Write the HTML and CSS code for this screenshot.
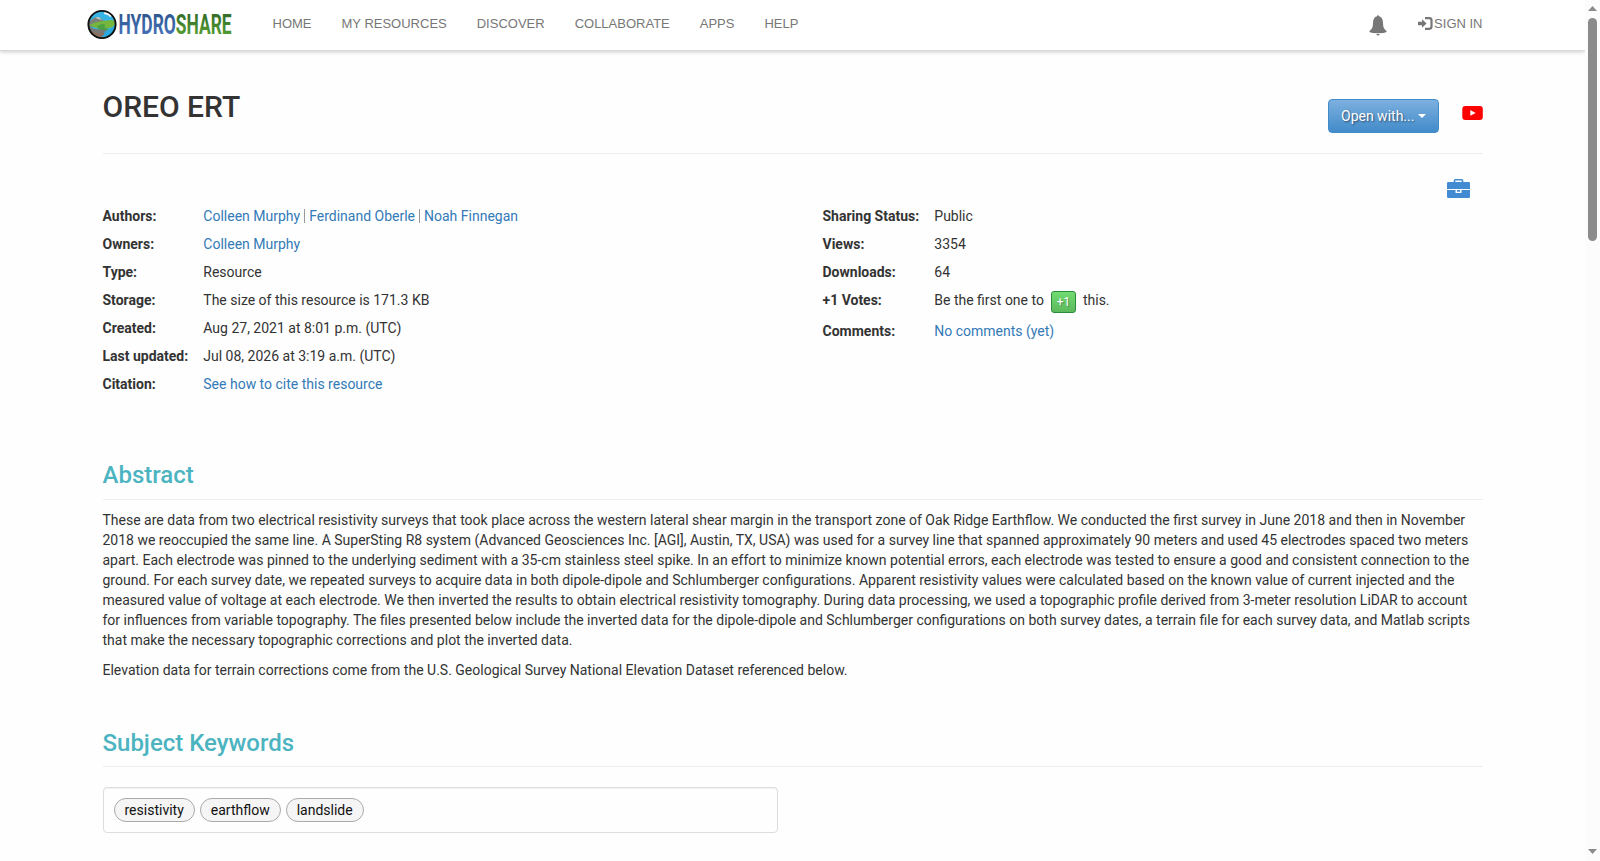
FILE: index.html
```html
<!DOCTYPE html>
<html lang="en">
<head>
<meta charset="utf-8">
<title>OREO ERT | HydroShare</title>
<link rel="stylesheet" href="styles.css">
</head>
<body>
<div class="viewport">
<div class="page">
  <header class="navbar">
    <div class="nav-inner">
      <a class="brand" aria-label="HydroShare">
        <svg width="146" height="32" viewBox="0 0 146 32">
          <defs>
            <linearGradient id="blue" x1="0" y1="0" x2="0" y2="1"><stop offset=".2" stop-color="#305a93"/><stop offset="1" stop-color="#4c78c6"/></linearGradient>
            <linearGradient id="green" x1="0" y1="0" x2="0" y2="1"><stop offset=".2" stop-color="#36702a"/><stop offset="1" stop-color="#62ad35"/></linearGradient>
            <clipPath id="globe"><circle cx="15" cy="16.500" r="14"/></clipPath>
          </defs>
          <g clip-path="url(#globe)">
            <rect width="30" height="32" fill="#38b4e4"/>
            <path d="M0 15L8 9.500l4-.5 5 4 7 1 2 5H0z" fill="#7b7f79"/>
            <path d="M8 9.500l4-.5 3 3-4-1z" fill="#c6cbc8"/>
            <path d="M2 17q6-3 13-4l9-1q3 0 5 2l-3 5-8 2-9-1z" fill="#76b63f"/>
            <path d="M12 17q5-2 6 0-2 3 5 4l-7 2q-9-3-4-6z" fill="#4aa244"/>
            <path d="M0 18q6 3 13 3.500 8 0 9 2.500l-7 8H0z" fill="#777974"/>
            <path d="M4 23q5 3 14 2l-3 6H8z" fill="#8b6f5f"/>
            <path d="M17 24l6-3 6-4-4 12H14q5-3 3-5z" fill="#29a9dc"/>
            <path d="M17 6q0-3 3-2 2-2 4 0 4 0 4 3l-3 1-2 1-2-2z" fill="#fff"/>
          </g>
          <circle cx="15" cy="16.500" r="13.600" fill="none" stroke="#111" stroke-width="1.900"/>
          <g transform="translate(31.500 26.300) scale(.65 1)">
            <text class="logo-text" textLength="174" lengthAdjust="spacingAndGlyphs"><tspan fill="url(#blue)">HYDRO</tspan><tspan fill="url(#green)">SHARE</tspan></text>
          </g>
        </svg>
      </a>
      <nav class="menu"><a>HOME</a><a>MY RESOURCES</a><a>DISCOVER</a><a>COLLABORATE</a><a>APPS</a><a>HELP</a></nav>
      <div class="account">
        <svg class="bell" width="18" height="21" viewBox="0 0 18 21" fill="#777"><path d="M8 1.300q0-1 1-1t1 1Q14 2.500 14 8q0 5.500 3 7.500 1 .8.500 1.500Q15.500 18.200 9 18.200T.5 17q-.5-.7.5-1.500 3-2 3-7.500 0-5.500 4-6.700zM7.300 18.900h3.400Q10.300 20.400 9 20.400t-1.700-1.500z"/></svg>
        <a class="signin"><svg width="15" height="13" viewBox="0 0 15 13"><path d="M0 4.700h4V2.300l4.600 4.200L4 10.700V8.300H0z" fill="#777"/><path d="M7 1.200h4.300q2.200 0 2.200 2.200v6.200q0 2.200-2.200 2.200H7" fill="none" stroke="#777" stroke-width="2.200"/></svg><span>SIGN IN</span></a>
      </div>
    </div>
  </header>
  <main class="content">
    <div class="title-row">
      <h1>OREO ERT</h1>
      <div class="title-actions">
        <button class="open-with">Open with...<span class="caret"></span></button>
        <svg width="21" height="14" viewBox="0 0 21 14"><rect x=".3" width="20.500" height="14" rx="3" fill="#f00"/><path d="M8.300 4v5.800L13.700 7z" fill="#fff"/></svg>
      </div>
    </div>
    <div class="tools">
      <svg width="23" height="19" viewBox="0 0 23 19"><path d="M7.500 3.500V1.500q0-.7.7-.7h6.600q.7 0 .7.700v2" fill="none" stroke="#428bd3" stroke-width="1.600"/><path d="M1.200 3h20.600Q23 3 23 4.200V10H0V4.200Q0 3 1.200 3zM0 11h8.500v3h6v-3H23v6.800q0 1.200-1.200 1.200H1.200Q0 19 0 17.800z" fill="#428bd3"/><path d="M10 11h3v1.700h-3z" fill="#428bd3"/></svg>
    </div>
    <div class="meta">
      <dl class="facts facts-left">
        <dt>Authors:</dt><dd class="authors"><a>Colleen Murphy</a><a>Ferdinand Oberle</a><a>Noah Finnegan</a></dd>
        <dt>Owners:</dt><dd><a>Colleen Murphy</a></dd>
        <dt>Type:</dt><dd>Resource</dd>
        <dt>Storage:</dt><dd>The size of this resource is 171.3 KB</dd>
        <dt>Created:</dt><dd>Aug 27, 2021 at 8:01 p.m. (UTC)</dd>
        <dt>Last updated:</dt><dd>Jul 08, 2026 at 3:19 a.m. (UTC)</dd>
        <dt>Citation:</dt><dd><a>See how to cite this resource</a></dd>
      </dl>
      <dl class="facts facts-right">
        <dt>Sharing Status:</dt><dd>Public</dd>
        <dt>Views:</dt><dd>3354</dd>
        <dt>Downloads:</dt><dd>64</dd>
        <dt>+1 Votes:</dt><dd class="votes"><span>Be the first one to</span><button class="plus">+1</button><span>this.</span></dd>
        <dt>Comments:</dt><dd><a>No comments (yet)</a></dd>
      </dl>
    </div>
    <section class="abstract">
      <h2>Abstract</h2>
      <p>These are data from two electrical resistivity surveys that took place across the western lateral shear margin in the transport zone of Oak Ridge Earthflow. We conducted the first survey in June 2018 and then in November 2018 we reoccupied the same line. A SuperSting R8 system (Advanced Geosciences Inc. [AGI], Austin, TX, USA) was used for a survey line that spanned approximately 90 meters and used 45 electrodes spaced two meters apart. Each electrode was pinned to the underlying sediment with a 35-cm stainless steel spike. In an effort to minimize known potential errors, each electrode was tested to ensure a good and consistent connection to the ground. For each survey date, we repeated surveys to acquire data in both dipole-dipole and Schlumberger configurations. Apparent resistivity values were calculated based on the known value of current injected and the measured value of voltage at each electrode. We then inverted the results to obtain electrical resistivity tomography. During data processing, we used a topographic profile derived from 3-meter resolution LiDAR to account for influences from variable topography. The files presented below include the inverted data for the dipole-dipole and Schlumberger configurations on both survey dates, a terrain file for each survey data, and Matlab scripts that make the necessary topographic corrections and plot the inverted data.</p>
      <p>Elevation data for terrain corrections come from the U.S. Geological Survey National Elevation Dataset referenced below.</p>
    </section>
    <section class="keywords">
      <h2>Subject Keywords</h2>
      <div class="tags"><a>resistivity</a><a>earthflow</a><a>landslide</a></div>
    </section>
  </main>
</div>
<div class="scrollbar">
  <svg width="9" height="5" viewBox="0 0 9 5"><path d="M0 5L4.500 0 9 5z" fill="#8b8b8b"/></svg>
  <div class="thumb"></div>
  <svg class="down" width="9" height="5" viewBox="0 0 9 5"><path d="M0 0h9L4.500 5z" fill="#8b8b8b"/></svg>
</div>
</div>
</body>
</html>
```
FILE: styles.css
```css
* { box-sizing: border-box; }
body {
  margin: 0;
  font: 14px/20px Roboto, sans-serif;
  color: #333;
  background: #fefefe;
}
svg { display: block; flex: none; }
a { color: #337ab7; text-decoration: none; }
h1, h2, p, dl, dd { margin: 0; }

.viewport { display: flex; height: 861px; overflow: hidden; }
.page { width: 1585px; }

.navbar {
  height: 51px;
  background: #fff;
  border-bottom: 1px solid #d9d9d9;
  box-shadow: 0 1px 4px rgba(0, 0, 0, .2);
}
.nav-inner {
  display: flex;
  width: 1410px;
  height: 50px;
  margin: 0 auto;
  font: 13px/20px "Liberation Sans", Arial, sans-serif;
}
.nav-inner a { color: #777; }
.brand { width: 146px; padding-top: 8px; }
.brand svg { margin-left: -0.500px; }
.logo-text { font: bold 27px Roboto, sans-serif; }
.menu { display: flex; gap: 30px; padding: 14px 0 0 39px; }
.account { display: flex; gap: 31px; margin-left: auto; padding-right: 15px; }
.bell { margin-top: 15px; }
.signin { display: flex; gap: 1px; padding-top: 14px; }
.signin svg { margin-top: 3px; }

.content { width: 1380px; margin: 0 auto; }
.title-row {
  display: flex;
  justify-content: space-between;
  height: 103px;
  border-bottom: 1px solid #eee;
}
h1 { padding-top: 39px; font-weight: 500; font-size: 30px; line-height: 33px; }
.title-actions { display: flex; gap: 23px; padding-top: 48px; }
.title-actions svg { margin-top: 7px; }
.open-with {
  display: flex;
  align-items: center;
  gap: 4px;
  width: 111px;
  height: 34px;
  padding: 0 12px 0 12.500px;
  border: 1px solid #428bca;
  border-radius: 4px;
  background: linear-gradient(#7cb0df, #428bca);
  color: #fff;
  font: 14px/20px Roboto, sans-serif;
  text-shadow: 1px 1px 2px rgba(0, 0, 0, .5);
  white-space: nowrap;
}
.caret { border: 4px solid transparent; border-top-color: #fff; border-bottom: 0; }

.tools { display: flex; justify-content: flex-end; padding: 25px 12.500px 0 0; height: 48px; }

.meta { display: flex; }
.facts { display: grid; align-content: start; width: 720px; padding-top: 4px; }
.facts-left { grid-template-columns: 100.800px 1fr; height: 259px; }
.facts-right { grid-template-columns: 111.800px 1fr; }
.facts dt, .facts dd { height: 28px; padding: 0; }
.facts-right { grid-template-rows: 28px 28px 28px 31px 28px; width: 660px; }
dt { font-weight: bold; }
.authors { display: flex; align-items: flex-start; }
.authors a + a::before {
  content: "";
  display: inline-block;
  height: 14px;
  margin: 0 4px;
  border-left: 1px solid #999;
  vertical-align: -2px;
}
.votes { display: flex; gap: 7px; }
.plus {
  width: 25px;
  height: 22px;
  margin-top: 1px;
  padding: 0;
  border: 1px solid #2c8a3c;
  border-radius: 3px;
  background: linear-gradient(#72dc72, #5cb85c);
  color: #fff;
  font: 12px/18px Roboto, sans-serif;
  text-shadow: 1px 1px 1px rgba(0, 0, 0, .3);
}

h2 {
  height: 39px;
  padding-top: 1px;
  border-bottom: 1px solid #eee;
  color: #4cb4c1;
  font-weight: 500;
  font-size: 24px;
  line-height: 27px;
}
.abstract p { margin-top: 10px; }
.keywords { margin-top: 49px; }
.keywords h2 { height: 38px; }
.tags {
  display: flex;
  gap: 5px;
  width: 675px;
  height: 46px;
  margin-top: 20px;
  padding: 10px;
  border: 1px solid #ddd;
  border-radius: 4px;
  box-shadow: inset 0 1px 1px rgba(0, 0, 0, .05);
}
.tags a {
  height: 24px;
  padding: 0 10px;
  border: 1px solid #aaa;
  border-radius: 12px;
  background: #f5f5f5;
  color: #111;
  line-height: 22px;
}

.scrollbar {
  display: flex;
  flex-direction: column;
  align-items: center;
  width: 15px;
  padding: 6px 0 7px;
  background: #fcfcfc;
}
.thumb { width: 9px; height: 223px; margin-top: 7px; border-radius: 5px; background: #8b8b8b; }
.down { margin-top: auto; }
```
